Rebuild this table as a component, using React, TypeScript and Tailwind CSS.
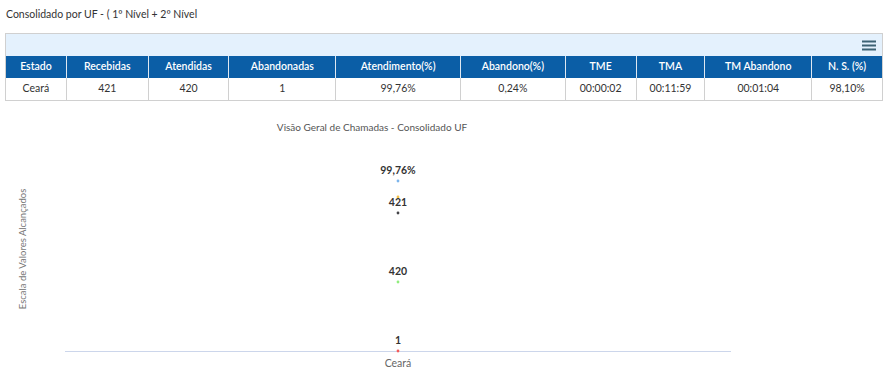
const cols = [
  { label: "Estado", w: 60, value: "Ceará" },
  { label: "Recebidas", w: 82, value: "421" },
  { label: "Atendidas", w: 81, value: "420" },
  { label: "Abandonadas", w: 107, value: "1" },
  { label: "Atendimento(%)", w: 125, value: "99,76%" },
  { label: "Abandono(%)", w: 105, value: "0,24%" },
  { label: "TME", w: 71, value: "00:00:02" },
  { label: "TMA", w: 69, value: "00:11:59" },
  { label: "TM Abandono", w: 107, value: "00:01:04" },
  { label: "N. S. (%)", w: 71, value: "98,10%" },
];

const points = [
  { label: "99,76%", y: 181, color: "#7cb5ec" },
  { label: "", y: 197, color: "#f7c34a" },
  { label: "421", y: 213, color: "#434348" },
  { label: "420", y: 282, color: "#90ed7d" },
  { label: "1", y: 351, color: "#f45b5b" },
];

function Menu() {
  return (
    <svg width="14" height="11" viewBox="0 0 14 11" className="mr-[6px]">
      <path d="M0 1.5h14M0 5.5h14M0 9.5h14" stroke="#3d6274" strokeWidth="1.8" />
    </svg>
  );
}

export default function App() {
  return (
    <div className="w-[886px] h-[372px] bg-white overflow-hidden text-[#333]" style={{ fontFamily: "Lato, 'Noto Sans', sans-serif" }}>
      <div className="pl-[6px] pt-[7px] h-[33px] text-[10.5px] text-[#333]">Consolidado por UF - ( 1º Nível + 2º Nível</div>
      <div className="ml-[5px] w-[878px] border border-[#d0d0d0]">
        <div className="h-[22px] bg-[#e4f1fd] flex items-center justify-end">
          <Menu />
        </div>
        <div className="flex h-[22px] bg-[#0b5ea6] text-white text-[10.5px] font-semibold">
          {cols.map((c, i) => (
            <div key={c.label} style={{ width: c.w }} className={"flex items-center justify-center " + (i > 0 ? "border-l border-[#dfe8f1]" : "")}>
              {c.label}
            </div>
          ))}
        </div>
        <div className="flex h-[22px] text-[10.5px] text-[#333]">
          {cols.map((c, i) => (
            <div key={c.label} style={{ width: c.w }} className={"flex items-center justify-center " + (i > 0 ? "border-l border-[#d0d0d0]" : "")}>
              {c.value}
            </div>
          ))}
        </div>
      </div>
      <svg width="886" height="271" viewBox="0 101 886 271" className="block">
        <text x="372" y="131" textAnchor="middle" fontSize="10" fill="#555" fontFamily="Lato, sans-serif">
          Visão Geral de Chamadas - Consolidado UF
        </text>
        <text x="0" y="0" transform="translate(26 249) rotate(-90)" textAnchor="middle" fontSize="9.5" fill="#777" fontFamily="Lato, sans-serif">
          Escala de Valores Alcançados
        </text>
        <line x1="65" y1="351.5" x2="731" y2="351.5" stroke="#ccd6eb" strokeWidth="1" />
        {points.map((p, i) => (
          <g key={i}>
            <circle cx="398" cy={p.y} r="1.4" fill={p.color} />
            {p.label && (
              <text x="398" y={p.y - 7} textAnchor="middle" fontSize="10.5" fontWeight="bold" fill="#333" fontFamily="Lato, sans-serif">
                {p.label}
              </text>
            )}
          </g>
        ))}
        <text x="398" y="367" textAnchor="middle" fontSize="10.5" fill="#666" fontFamily="Lato, sans-serif">
          Ceará
        </text>
      </svg>
    </div>
  );
}
